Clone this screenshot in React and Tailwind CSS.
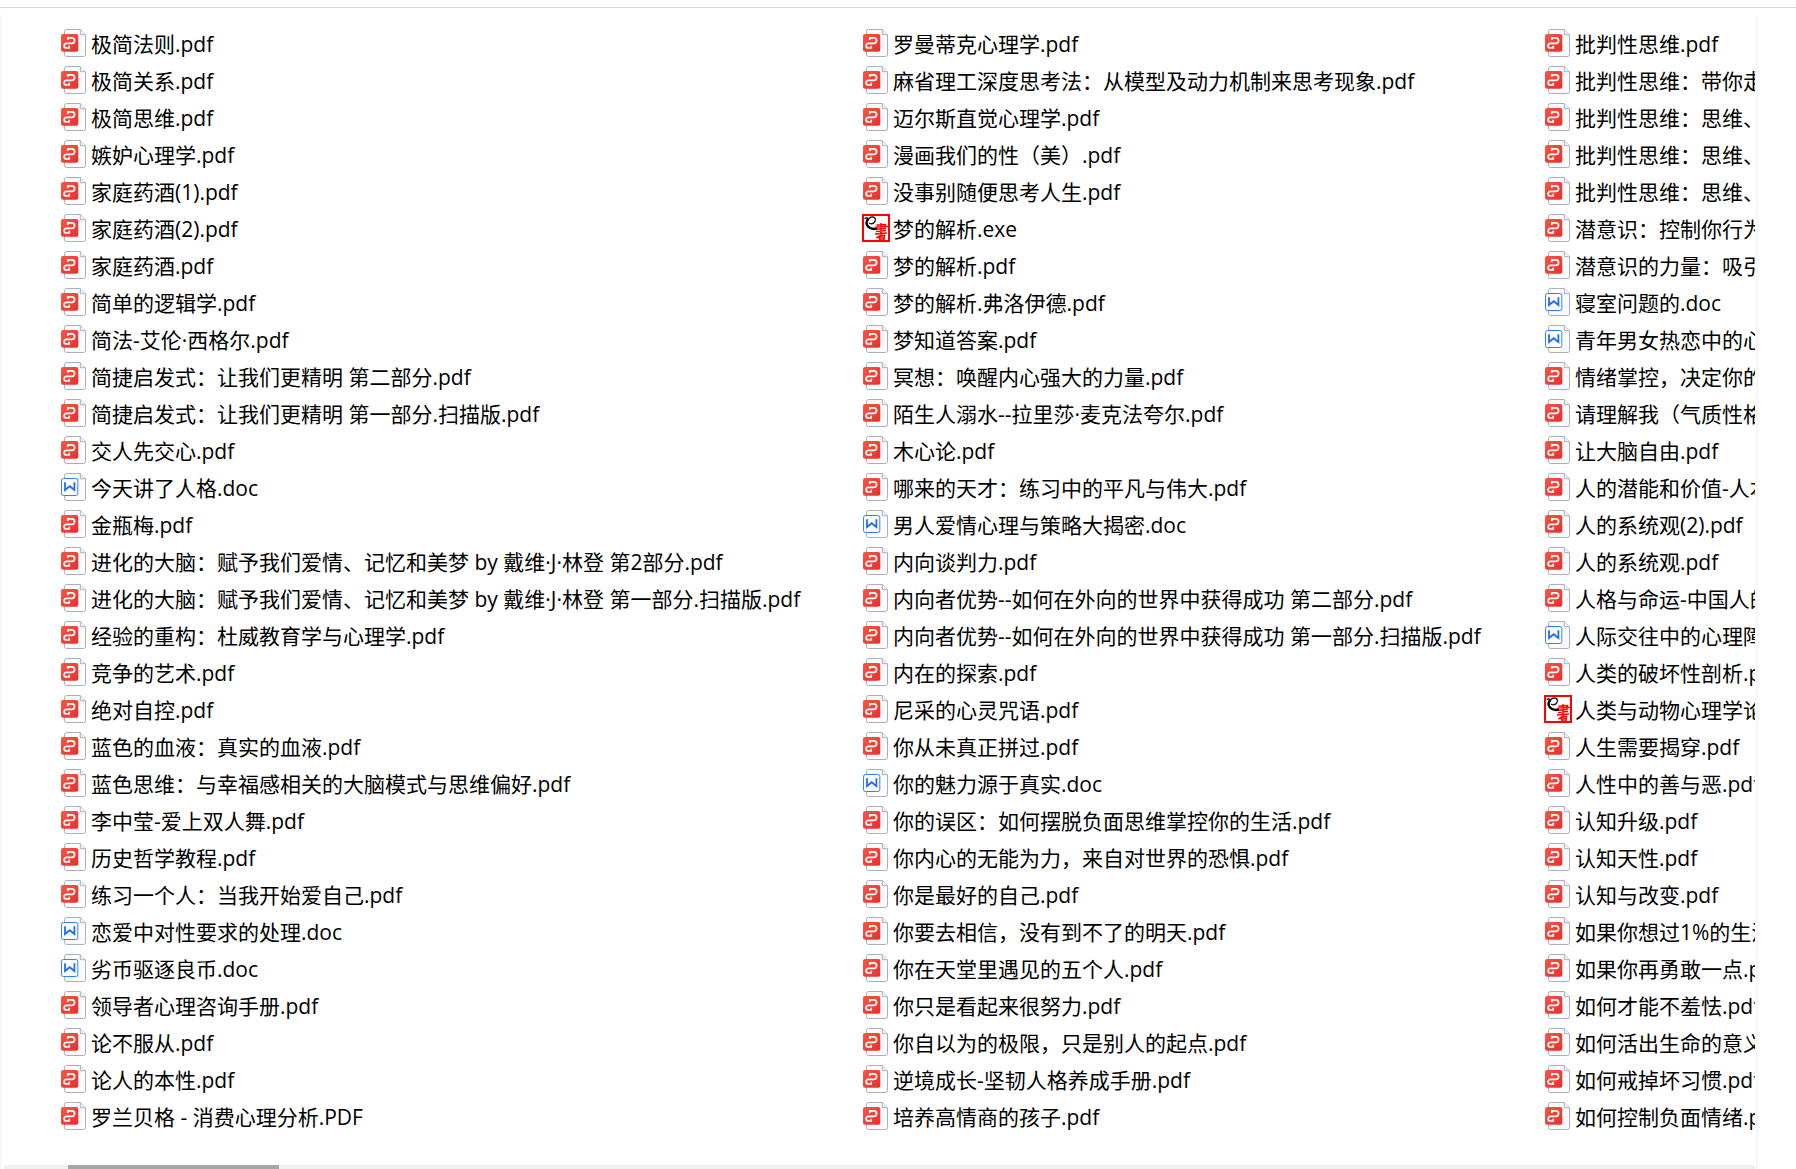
import React from 'react';

const columns = [
  {
    className: "w-[802px] shrink-0",
    files: [
      "极简法则.pdf",
      "极简关系.pdf",
      "极简思维.pdf",
      "嫉妒心理学.pdf",
      "家庭药酒(1).pdf",
      "家庭药酒(2).pdf",
      "家庭药酒.pdf",
      "简单的逻辑学.pdf",
      "简法-艾伦·西格尔.pdf",
      "简捷启发式：让我们更精明 第二部分.pdf",
      "简捷启发式：让我们更精明 第一部分.扫描版.pdf",
      "交人先交心.pdf",
      "今天讲了人格.doc",
      "金瓶梅.pdf",
      "进化的大脑：赋予我们爱情、记忆和美梦 by 戴维·J·林登 第2部分.pdf",
      "进化的大脑：赋予我们爱情、记忆和美梦 by 戴维·J·林登 第一部分.扫描版.pdf",
      "经验的重构：杜威教育学与心理学.pdf",
      "竞争的艺术.pdf",
      "绝对自控.pdf",
      "蓝色的血液：真实的血液.pdf",
      "蓝色思维：与幸福感相关的大脑模式与思维偏好.pdf",
      "李中莹-爱上双人舞.pdf",
      "历史哲学教程.pdf",
      "练习一个人：当我开始爱自己.pdf",
      "恋爱中对性要求的处理.doc",
      "劣币驱逐良币.doc",
      "领导者心理咨询手册.pdf",
      "论不服从.pdf",
      "论人的本性.pdf",
      "罗兰贝格 - 消费心理分析.PDF",
    ],
  },
  {
    className: "w-[682px] shrink-0",
    files: [
      "罗曼蒂克心理学.pdf",
      "麻省理工深度思考法：从模型及动力机制来思考现象.pdf",
      "迈尔斯直觉心理学.pdf",
      "漫画我们的性（美）.pdf",
      "没事别随便思考人生.pdf",
      "梦的解析.exe",
      "梦的解析.pdf",
      "梦的解析.弗洛伊德.pdf",
      "梦知道答案.pdf",
      "冥想：唤醒内心强大的力量.pdf",
      "陌生人溺水--拉里莎·麦克法夸尔.pdf",
      "木心论.pdf",
      "哪来的天才：练习中的平凡与伟大.pdf",
      "男人爱情心理与策略大揭密.doc",
      "内向谈判力.pdf",
      "内向者优势--如何在外向的世界中获得成功 第二部分.pdf",
      "内向者优势--如何在外向的世界中获得成功 第一部分.扫描版.pdf",
      "内在的探索.pdf",
      "尼采的心灵咒语.pdf",
      "你从未真正拼过.pdf",
      "你的魅力源于真实.doc",
      "你的误区：如何摆脱负面思维掌控你的生活.pdf",
      "你内心的无能为力，来自对世界的恐惧.pdf",
      "你是最好的自己.pdf",
      "你要去相信，没有到不了的明天.pdf",
      "你在天堂里遇见的五个人.pdf",
      "你只是看起来很努力.pdf",
      "你自以为的极限，只是别人的起点.pdf",
      "逆境成长-坚韧人格养成手册.pdf",
      "培养高情商的孩子.pdf",
    ],
  },
  {
    className: "min-w-0 flex-1",
    files: [
      "批判性思维.pdf",
      "批判性思维：带你走.pdf",
      "批判性思维：思维、.pdf",
      "批判性思维：思维、.pdf",
      "批判性思维：思维、.pdf",
      "潜意识：控制你行为.pdf",
      "潜意识的力量：吸引.pdf",
      "寝室问题的.doc",
      "青年男女热恋中的心.doc",
      "情绪掌控，决定你的.pdf",
      "请理解我（气质性格.pdf",
      "让大脑自由.pdf",
      "人的潜能和价值-人本.pdf",
      "人的系统观(2).pdf",
      "人的系统观.pdf",
      "人格与命运-中国人的.pdf",
      "人际交往中的心理障.doc",
      "人类的破坏性剖析.pdf",
      "人类与动物心理学论.exe",
      "人生需要揭穿.pdf",
      "人性中的善与恶.pdf",
      "认知升级.pdf",
      "认知天性.pdf",
      "认知与改变.pdf",
      "如果你想过1%的生活.pdf",
      "如果你再勇敢一点.pdf",
      "如何才能不羞怯.pdf",
      "如何活出生命的意义.pdf",
      "如何戒掉坏习惯.pdf",
      "如何控制负面情绪.pdf",
    ],
  },
];

const Page = () => (
  <>
    <path
      d="M6.5 0.5H20.2L25.5 5.8V25.5Q25.5 27.5 23.5 27.5H6.5Q4.5 27.5 4.5 25.5V2.5Q4.5 0.5 6.5 0.5Z"
      fill="#fcfcff"
      stroke="#a9afbd"
    />
    <path d="M20.3 0.5V5.7H25.5" fill="#f0f1f4" stroke="#a9afbd" />
  </>
);

const PdfIcon = () => (
  <svg viewBox="0 0 28 28" className="mb-[3px] size-7 shrink-0" aria-hidden="true">
    <defs>
      <linearGradient id="pdf-red" x1="0" y1="0" x2="1" y2="1">
        <stop offset="0" stopColor="#fb5543" />
        <stop offset="1" stopColor="#e5302f" />
      </linearGradient>
    </defs>
    <Page />
    <rect x="1" y="5" width="17.3" height="17.8" rx="2" fill="url(#pdf-red)" />
    <path
      d="M7.8 11V8.8H11.8A2.8 2.8 0 0 1 11.8 14.4H6.4A2.3 2.3 0 0 0 6.4 19H9.2V16.8"
      fill="none"
      stroke="#fff"
      strokeWidth="1.7"
    />
  </svg>
);

const DocIcon = () => (
  <svg viewBox="0 0 28 28" className="mb-[3px] size-7 shrink-0" aria-hidden="true">
    <Page />
    <rect x="1.5" y="5.5" width="16.3" height="17" rx="2" fill="#fff" stroke="#2f80ff" />
    <path
      d="M5 9.2V17L9.7 13.2L14.4 17V9.2"
      fill="none"
      stroke="#1f6cf5"
      strokeWidth="1.8"
    />
  </svg>
);

const ExeIcon = () => (
  <svg viewBox="0 0 28 28" className="mb-[3px] size-7 shrink-0" aria-hidden="true">
    <rect x="1" y="1" width="26" height="26" fill="#fff" stroke="#f00" strokeWidth="2" />
    <path d="M2.5 4.5L5.5 3.5M5.5 7Q7 2.5 11 3Q14.5 4 13 7.5Q10.5 11 7 9" fill="none" stroke="#222" strokeWidth="1.4" />
    <path d="M6.3 4.5Q3 9 6 12.5Q9 16 15 14.5" fill="none" stroke="#000" strokeWidth="2.4" />
    <path
      d="M14.5 11L23.5 10.5L23 14.5L14.5 15M13.5 13L26 12.5M19 9V20M14 17.5L24 16.5M13 20L25 19M21 20L14.5 24M17 22.5L22.5 21.5L22 26H18ZM17.5 24H22.5"
      fill="none"
      stroke="#f00"
      strokeWidth="1.5"
    />
  </svg>
);

const FileIcon = ({ name }) => {
  if (name.endsWith(".doc")) return <DocIcon />;
  if (name.endsWith(".exe")) return <ExeIcon />;
  return <PdfIcon />;
};

const App = () => {
  return (
    <div className="flex min-h-screen flex-col bg-white font-['Open_Sans','Noto_Sans_CJK_SC',sans-serif] text-[21px] text-black">
      <div className="h-2 border-b border-[#d9d9d9]" />

      {/* File pane */}
      <main className="mt-[7px] mr-[38px] flex flex-1 flex-col border-x-2 border-[#f7f7f7] pr-px pl-0.5">
        <div className="flex flex-1 overflow-hidden pt-[11px] pb-7 pl-14">
          {columns.map((column, index) => (
            <ul key={index} className={column.className}>
              {column.files.map((name, i) => (
                <li key={i} className="flex h-[37px] items-center gap-[3px] leading-[37px] whitespace-nowrap">
                  <FileIcon name={name} />
                  <span>{name}</span>
                </li>
              ))}
            </ul>
          ))}
        </div>

        {/* Horizontal scrollbar */}
        <div className="h-1 bg-[#f0f0f0] pl-16">
          <div className="h-1 w-[211px] bg-[#a6a6a6]" />
        </div>
      </main>
    </div>
  );
};

export default App;
